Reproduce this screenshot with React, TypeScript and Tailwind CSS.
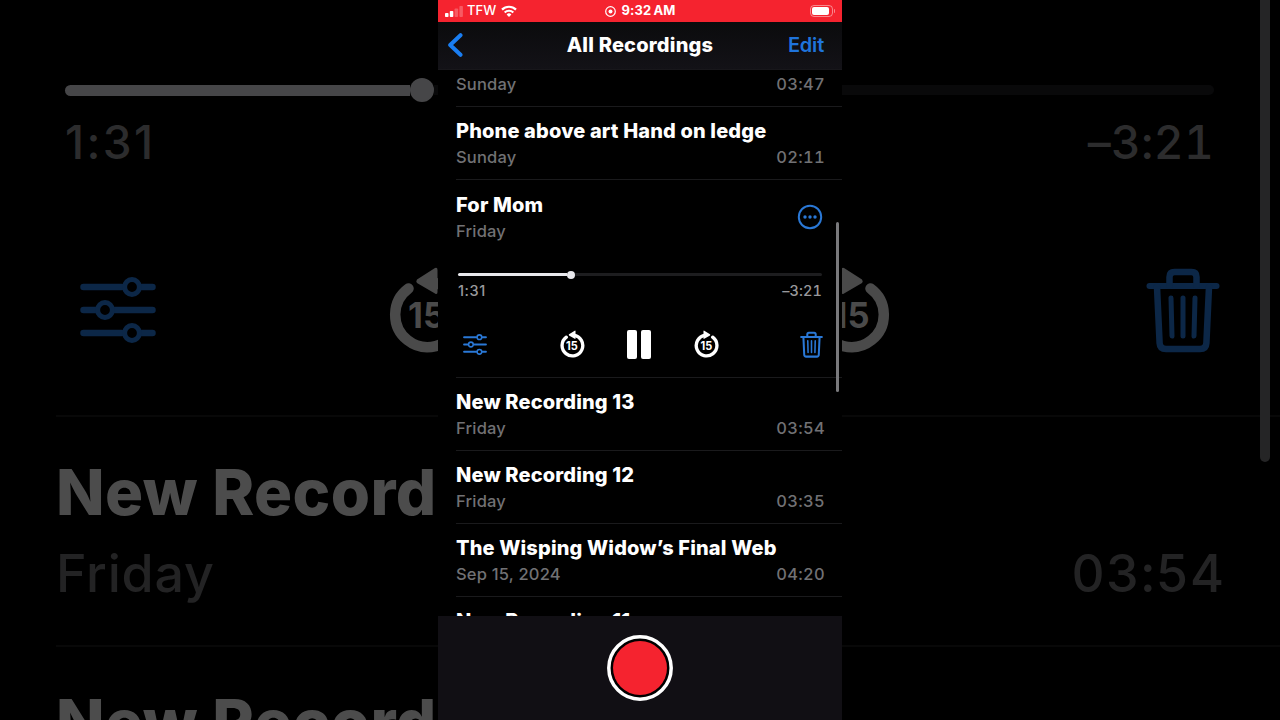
import { useState } from "react";

interface Recording {
  id: number;
  title: string;
  date: string;
  duration: string;
}

const olderRecordings: Recording[] = [
  { id: 13, title: "New Recording 13", date: "Friday", duration: "03:54" },
  { id: 12, title: "New Recording 12", date: "Friday", duration: "03:35" },
  {
    id: 10,
    title: "The Wisping Widow’s Final Web",
    date: "Sep 15, 2024",
    duration: "04:20",
  },
];

const OptionsIcon = ({ className }: { className: string }) => (
  <svg className={className} viewBox="0 0 76 66" fill="none" stroke="currentColor">
    <g strokeWidth="6.5" strokeLinecap="round">
      <path d="M3.5 10h38M62 10h10.5M3.5 33h12M35 33h37.5M3.5 56h38M62 56h10.5" />
    </g>
    <g strokeWidth="5">
      <circle cx="52" cy="10" r="7.4" />
      <circle cx="25" cy="33" r="7.4" />
      <circle cx="52" cy="56" r="7.4" />
    </g>
  </svg>
);

const SkipIcon = ({ className, forward }: { className: string; forward?: boolean }) => (
  <svg className={className} viewBox="0 0 78 88" fill="none">
    <g transform={forward ? "translate(78 0) scale(-1 1)" : undefined}>
      <path
        d="M43 16.5A32.5 32.5 0 1 1 19.5 22.5"
        stroke="currentColor"
        strokeWidth="10.5"
        strokeLinecap="round"
      />
      <path
        d="M28 13.5 L46 2 Q48.5 1 48.5 4 V26 Q48.5 29 46 27.5 L28 17 Q26.5 15.5 28 13.5Z"
        fill="currentColor"
      />
    </g>
    <text
      x={forward ? 39 : 37.5}
      y="61.5"
      textAnchor="middle"
      fill="currentColor"
      textLength="37"
      lengthAdjust="spacingAndGlyphs"
      className="text-[36px] font-bold"
    >
      15
    </text>
  </svg>
);

const TrashIcon = ({ className }: { className: string }) => (
  <svg
    className={className}
    viewBox="0 0 74 86"
    fill="none"
    stroke="currentColor"
    strokeLinecap="round"
    strokeLinejoin="round"
  >
    <path strokeWidth="6" d="M3.5 19h67" />
    <path strokeWidth="6.5" d="M23.5 18v-8q0-5 5-5h17q5 0 5 5v8" />
    <path strokeWidth="6.5" d="M11 20l2.6 56q.3 6 6.4 6h34q6.1 0 6.4-6L63 20" />
    <path strokeWidth="5" d="M25 31l1 38M37 31v38M49 31l-1 38" />
  </svg>
);

const StatusBar = () => (
  <div className="flex h-[22px] items-center justify-between bg-[#f5232f] px-[7px] text-white">
    <div className="flex w-[120px] items-center">
      <svg className="h-[11px] w-[19px]" viewBox="0 0 19 11" fill="currentColor">
        <rect x="0" y="7" width="3.5" height="4" rx="0.8" />
        <rect x="4.8" y="5" width="3.5" height="6" rx="0.8" />
        <rect x="9.6" y="2.5" width="3.5" height="8.5" rx="0.8" opacity="0.25" />
        <rect x="14.4" y="0" width="3.5" height="11" rx="0.8" opacity="0.25" />
      </svg>
      <span className="ml-[3px] text-[13px] font-medium">TFW</span>
      <svg className="ml-[5px] h-[12px] w-[16px]" viewBox="0 0 16 12" fill="none" stroke="currentColor">
        <path strokeWidth="2.2" d="M1 4.6a10 10 0 0 1 14 0" />
        <path strokeWidth="2.2" d="M3.7 7.5a6.2 6.2 0 0 1 8.6 0" />
        <path fill="currentColor" stroke="none" d="M8 11.9 5.6 9.5a3.5 3.5 0 0 1 4.8 0z" />
      </svg>
    </div>
    <div className="flex items-center">
      <svg className="mr-[6px] h-[11px] w-[11px]" viewBox="0 0 11 11" fill="none">
        <circle cx="5.5" cy="5.5" r="4.8" stroke="currentColor" strokeWidth="1.2" />
        <circle cx="5.5" cy="5.5" r="2" fill="currentColor" />
      </svg>
      <span className="text-[13px] font-bold tracking-[0.1px]">9:32&#8201;AM</span>
    </div>
    <div className="flex w-[120px] items-center justify-end">
      <div className="flex h-[12px] w-[23px] rounded-[4px] border border-white/45 p-px">
        <div className="w-[17px] rounded-[2px] bg-white" />
      </div>
      <div className="ml-px h-[4px] w-px rounded-r bg-white/45" />
    </div>
  </div>
);

const NavBar = () => (
  <div className="flex h-12 items-center justify-between border-b border-[#18171b] bg-linear-to-b from-[#0b0b0d] to-[#131217] pb-[2px] pl-[9px] pr-[18px]">
    <button className="flex w-[69px] text-[#1a7ef2]">
      <svg className="h-6 w-4" viewBox="0 0 16 24" fill="none" stroke="currentColor">
        <path d="M13.5 2.2 3.2 12l10.3 9.8" strokeWidth="4" strokeLinecap="round" strokeLinejoin="round" />
      </svg>
    </button>
    <h1 className="text-[20px] font-extrabold tracking-[0.2px] text-white">All Recordings</h1>
    <button className="w-[60px] text-right text-[20px] font-semibold tracking-[-0.2px] text-[#1f74dc]">Edit</button>
  </div>
);

const RowDetails = ({ date, duration }: { date: string; duration?: string }) => (
  <div className="flex justify-between pr-[17px] text-[16.5px] leading-[26px] font-medium text-[#717174]">
    <span className="tracking-[0.2px]">{date}</span>
    {duration && <span className="tracking-[0.3px] tabular-nums">{duration}</span>}
  </div>
);

const RowTitle = ({ title }: { title: string }) => (
  <h2 className="text-[20px] leading-[26px] font-extrabold tracking-[0.15px] whitespace-nowrap text-white">{title}</h2>
);

const RecordingRow = ({ recording }: { recording: Recording }) => (
  <li className="h-[73px] border-b border-[#1a1a1c] pt-[11px]">
    <RowTitle title={recording.title} />
    <RowDetails date={recording.date} duration={recording.duration} />
  </li>
);

const Player = () => {
  const [playing, setPlaying] = useState(true);

  return (
    <li className="h-[198px] border-b border-[#1a1a1c] pt-3">
      <div className="flex items-center justify-between pr-[19px]">
        <div>
          <RowTitle title="For Mom" />
          <RowDetails date="Friday" />
        </div>
        <svg className="mb-[3px] h-[26px] w-[26px] text-[#2a78d6]" viewBox="0 0 26 26" fill="currentColor">
          <circle cx="13" cy="13" r="11.2" fill="none" stroke="currentColor" strokeWidth="2" />
          <circle cx="8" cy="13" r="1.7" />
          <circle cx="13" cy="13" r="1.7" />
          <circle cx="18" cy="13" r="1.7" />
        </svg>
      </div>
      <div className="mt-[26px] mr-[20px] ml-[2px]">
        <div className="flex h-[9px] items-center">
          <div className="h-[3px] w-[109px] rounded-l-full bg-[#e8e8ec]" />
          <div className="h-2 w-2 rounded-full bg-[#e8e8ec]" />
          <div className="h-[3px] flex-1 rounded-r-full bg-[#1d1d1f]" />
        </div>
        <div className="mt-[3px] flex justify-between text-[14.5px] leading-[18px] font-medium text-[#98989b]">
          <span className="tracking-[0.6px]">1:31</span>
          <span className="tracking-[0.1px] tabular-nums">–3:21</span>
        </div>
      </div>
      <div className="mt-[29px] mr-[19px] ml-[7px] flex h-[30px] items-center">
        <OptionsIcon className="h-[21px] w-[24px] text-[#2a78d6]" />
        <SkipIcon className="ml-[73px] h-[28px] w-[25px] text-white" />
        <button className="ml-[42px] flex gap-1" onClick={() => setPlaying(!playing)}>
          {playing ? (
            <>
              <span className="h-[29px] w-[10px] rounded-[2px] bg-white" />
              <span className="h-[29px] w-[10px] rounded-[2px] bg-white" />
            </>
          ) : (
            <svg className="h-[29px] w-6" viewBox="0 0 24 29" fill="white">
              <path d="M2 1v27l21-13.5z" />
            </svg>
          )}
        </button>
        <SkipIcon forward className="ml-[43px] h-[28px] w-[25px] text-white" />
        <TrashIcon className="ml-auto h-[27px] w-[23px] text-[#2a78d6]" />
      </div>
    </li>
  );
};

const Phone = () => (
  <main className="relative mx-auto flex h-[720px] w-[404px] flex-col overflow-hidden bg-black">
    <StatusBar />
    <NavBar />
    <ul className="h-[546px] overflow-hidden pl-[18px]">
      <li className="h-[37px] border-b border-[#1a1a1c] pt-px">
        <RowDetails date="Sunday" duration="03:47" />
      </li>
      <RecordingRow
        recording={{ id: 15, title: "Phone above art Hand on ledge", date: "Sunday", duration: "02:11" }}
      />
      <Player />
      {olderRecordings.map((recording) => (
        <RecordingRow key={recording.id} recording={recording} />
      ))}
      <li className="pt-[11px]">
        <RowTitle title="New Recording 11" />
      </li>
    </ul>
    <footer className="flex h-[104px] justify-center bg-[#110f14] pt-[19px]">
      <button className="h-[66px] w-[66px]">
        <svg className="h-[66px] w-[66px]" viewBox="0 0 66 66">
          <circle cx="33" cy="33" r="31.2" fill="#000" stroke="#fff" strokeWidth="3.5" />
          <circle cx="33" cy="33" r="27" fill="#f5232f" />
        </svg>
      </button>
    </footer>
    <div className="absolute top-[222px] right-[3px] h-[170px] w-[3px] rounded-full bg-[#79797c]" />
  </main>
);

// Enlarged, dimmed copy of the player behind the phone
const Backdrop = () => (
  <div className="absolute inset-0 overflow-hidden" aria-hidden="true">
    <div className="mt-[78px] mr-[66px] ml-[65px] flex h-6 items-center">
      <div className="h-[11px] w-[345px] rounded-l-full bg-[#464648]" />
      <div className="h-6 w-6 rounded-full bg-[#464648]" />
      <div className="h-[10px] flex-1 rounded-r-full bg-[#09090a]" />
    </div>
    <div className="mt-[10px] mr-[66px] ml-[65px] flex justify-between text-[46px] leading-[60px] font-medium text-[#2c2c2d]">
      <span className="tracking-[2.4px]">1:31</span>
      <span className="tracking-[0.3px] tabular-nums">–3:21</span>
    </div>
    <div className="mt-[94px] mr-[60px] ml-[80px] flex h-[88px] items-center">
      <OptionsIcon className="h-[66px] w-[76px] text-[#0c2747]" />
      <SkipIcon className="ml-[233px] h-[88px] w-[78px] text-[#4a4a4a]" />
      <SkipIcon forward className="ml-[345px] h-[88px] w-[78px] text-[#4a4a4a]" />
      <TrashIcon className="ml-auto h-[86px] w-[74px] text-[#0c2747]" />
    </div>
    <div className="mt-[61px] ml-[56px] h-[230px] border-t-2 border-[#080808] pt-[36px]">
      <div className="text-[63.5px] leading-[78px] font-extrabold tracking-[0.4px] whitespace-nowrap text-[#4c4c4c]">New Record</div>
      <div className="flex justify-between pr-[55px] text-[52px] leading-[86px] font-medium text-[#232324]">
        <span className="tracking-[0.8px]">Friday</span>
        <span className="tracking-[1px] tabular-nums">03:54</span>
      </div>
    </div>
    <div className="ml-[56px] border-t-2 border-[#080808] pt-[36px] text-[63.5px] leading-[78px] font-extrabold tracking-[0.4px] whitespace-nowrap text-[#4c4c4c]">
      New Record
    </div>
    <div className="absolute -top-4 right-[10px] h-[478px] w-[10px] rounded-full bg-[#252526]" />
  </div>
);

const App = () => {
  return (
    <div className="relative h-[720px] w-[1280px] overflow-hidden bg-black font-['Inter','Liberation_Sans',sans-serif]">
      <Backdrop />
      <Phone />
    </div>
  );
};

export default App;
